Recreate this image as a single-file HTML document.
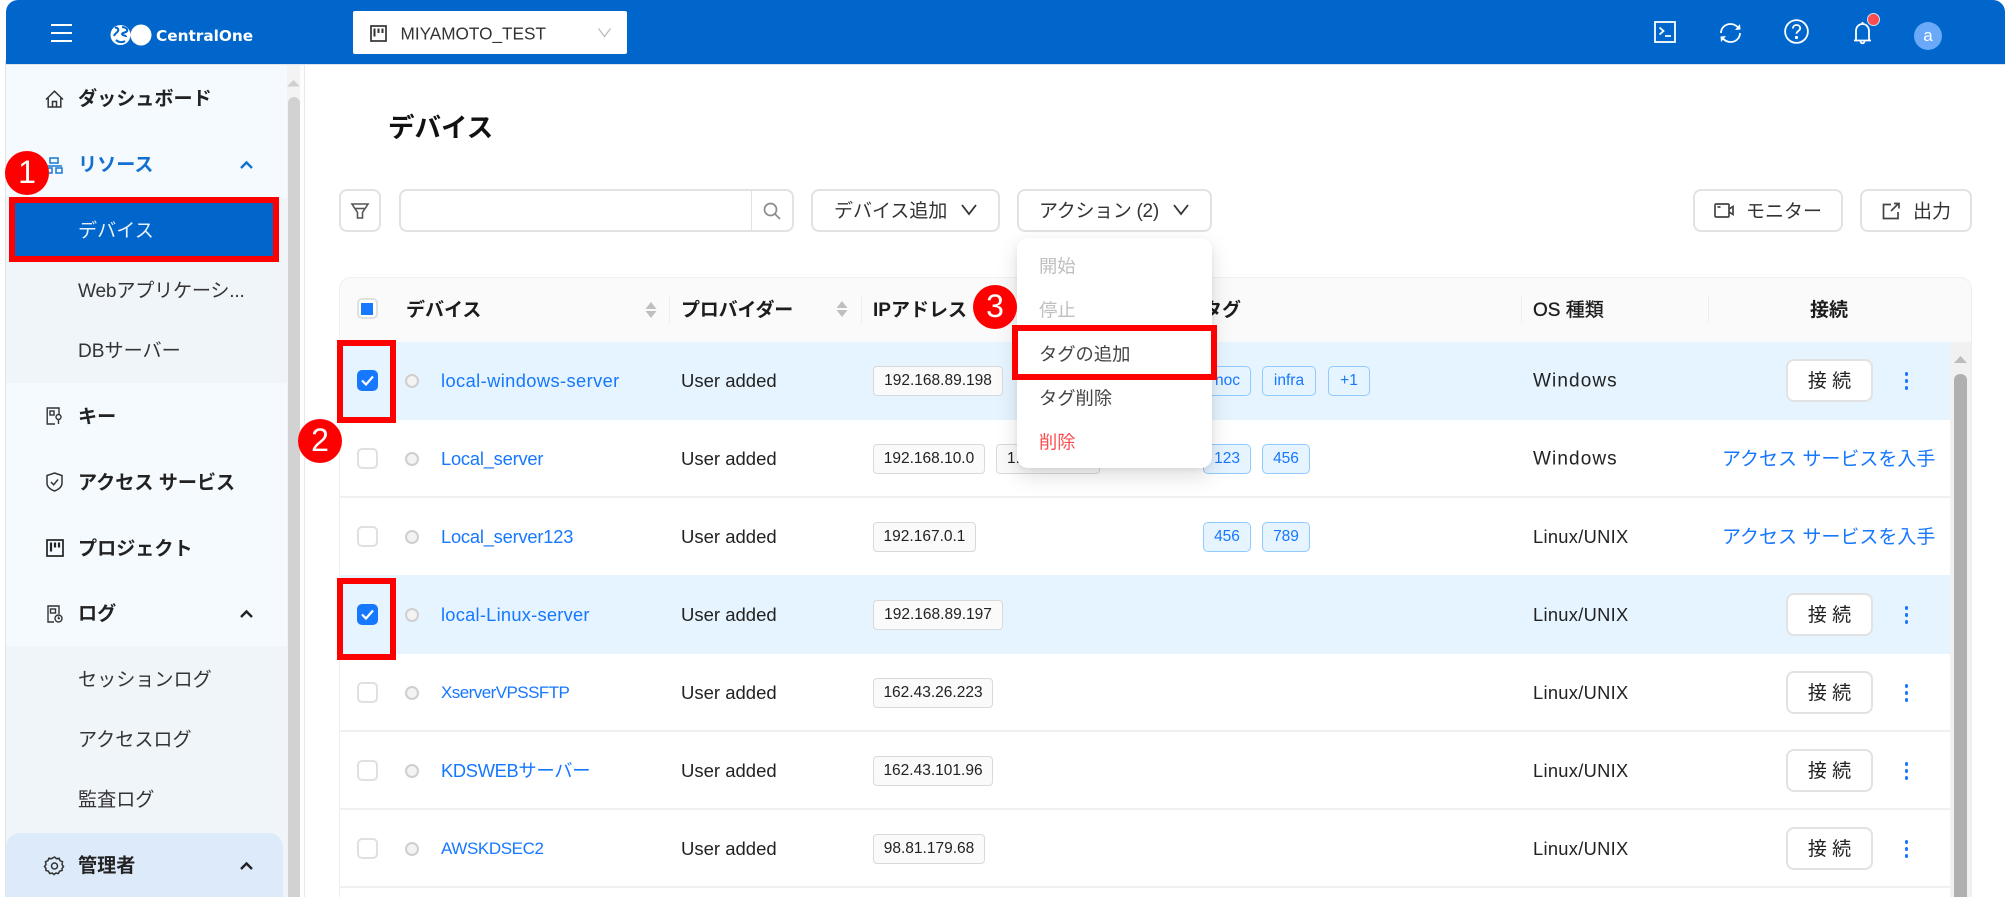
<!DOCTYPE html>
<html lang="ja">
<head>
<meta charset="utf-8">
<title>デバイス</title>
<style>
html,body{margin:0;padding:0;background:#fff}
body{position:relative;width:2005px;height:897px;overflow:hidden;font-family:"Liberation Sans","Noto Sans CJK JP",sans-serif;color:#222}
.b{position:absolute;box-sizing:border-box}
.t{position:absolute;white-space:nowrap;transform:translateY(-50%);line-height:1.2}
.s{font-size:19.1px;left:78px;font-weight:700;color:#222;transform:translateY(calc(-50% + 2.5px))}
.n{font-size:19.1px;left:78px;color:#333;transform:translateY(calc(-50% + 2.5px))}
.tb{transform:translateY(calc(-50% + 1.5px))}
svg{position:absolute;overflow:visible}
.btn{position:absolute;box-sizing:border-box;top:189px;height:43px;background:#fff;border:2px solid #e2e2e2;border-radius:8px}
.h{font-size:19px;font-weight:700;top:309px;color:#1c1c1c;transform:translateY(calc(-50% + 2.5px))}
.r{position:absolute;left:0;width:2005px;height:78px}
.bg{position:absolute;left:340px;width:1610px;top:0;height:78px;background:#fff;box-sizing:border-box}
.sel{background:#e6f4ff}
.sep{border-bottom:2px solid #f0f0f0}
.cb{position:absolute;left:357px;top:28px;width:21px;height:21px;box-sizing:border-box;border:2px solid #e0e0e0;border-radius:5px;background:#fff}
.cb.on{background:#1677ff;border-color:#1677ff}
.dot{position:absolute;left:405px;top:32px;width:14px;height:14px;box-sizing:border-box;border:2px solid #cfcfcf;border-radius:50%;background:#f3f3f3}
.nm{position:absolute;left:441px;top:39px;transform:translateY(-50%);font-size:18.3px;color:#1677ff;white-space:nowrap;line-height:1.2}
.ua{position:absolute;left:681px;top:39px;transform:translateY(-50%);font-size:18.5px;color:#222;white-space:nowrap;line-height:1.2}
.os{position:absolute;left:1533px;top:39px;transform:translateY(-50%);font-size:18.3px;color:#222;white-space:nowrap;line-height:1.2}
.ip{position:absolute;top:24px;height:30px;box-sizing:border-box;background:#fafafa;border:1.5px solid #d9d9d9;border-radius:4px;font-size:15.5px;line-height:27px;text-align:center;color:#222;white-space:nowrap;overflow:hidden}
.tg{position:absolute;top:24px;height:30px;box-sizing:border-box;background:#e6f4ff;border:1.5px solid #91caff;border-radius:5px;font-size:15.5px;line-height:27px;text-align:center;color:#1677ff;white-space:nowrap}
.con{position:absolute;left:1786px;top:17px;width:87px;height:43px;box-sizing:border-box;background:#fff;border:2px solid #e2e2e2;border-radius:8px;font-size:19px;line-height:42px;text-align:center;color:#222;white-space:nowrap}
.kb{position:absolute;left:1904.5px;width:3.5px;height:3.5px;border-radius:50%;background:#1677ff}
.acc{position:absolute;left:1722px;top:38px;transform:translateY(calc(-50% + 2.5px));font-size:19px;color:#1677ff;white-space:nowrap;line-height:1.2}
.rc{position:absolute;box-sizing:border-box;border:6px solid #f00}
.c{position:absolute;width:44px;height:44px;border-radius:50%;background:#f00;color:#fff;font-size:32px;line-height:43px;text-align:center}
.mi{position:absolute;left:1039px;font-size:18.3px;transform:translateY(calc(-50% + 1.5px));white-space:nowrap;line-height:1.2}
</style>
</head>
<body>

<!-- sidebar -->
<div class="b" style="left:5px;top:60px;width:1px;height:837px;background:#e2e2e2"></div>
<div class="b" style="left:6px;top:64px;width:298px;height:833px;background:#f5faff"></div>
<div class="b" style="left:6px;top:198px;width:281px;height:185px;background:#f0f5fa"></div>
<div class="b" style="left:6px;top:646px;width:281px;height:251px;background:#f0f5fa"></div>
<div class="b" style="left:6px;top:833px;width:277px;height:64px;background:#dceafa;border-radius:14px 14px 0 0"></div>
<div class="b" style="left:287px;top:64px;width:13px;height:833px;background:#f3f3f3"></div>
<div class="b" style="left:300px;top:64px;width:4px;height:833px;background:#fbfdff"></div>
<div class="b" style="left:304px;top:64px;width:1px;height:833px;background:#e9e9e9"></div>
<div class="b" style="left:288px;top:97px;width:12px;height:800px;background:#d2d2d2;border-radius:6px 6px 0 0"></div>
<svg style="left:287px;top:80px" width="13" height="7"><path d="M6.5 0L13 6.5H0z" fill="#d0d0d0"/></svg>

<!-- sidebar icons -->
<svg style="left:45px;top:90px" width="19" height="18" viewBox="0 0 19 18" fill="none" stroke="#333" stroke-width="1.5"><path d="M1 9.500L9.500 1.200L18 9.500"/><path d="M3.200 8v9h12.600V8"/><path d="M7.500 17v-5.500h4V17"/></svg>
<svg style="left:45px;top:157px" width="18" height="17" viewBox="0 0 18 17" fill="none" stroke="#1677d2" stroke-width="1.5"><rect x="5" y="1" width="8" height="5"/><path d="M1 9h16"/><rect x="1" y="11" width="6" height="5"/><rect x="11" y="11" width="6" height="5"/></svg>
<svg style="left:46px;top:407px" width="17" height="18" viewBox="0 0 17 18" fill="none" stroke="#333" stroke-width="1.4"><path d="M9 17H1.200V1H13v6"/><rect x="4" y="4" width="4" height="4"/><circle cx="12.500" cy="10" r="2.500"/><path d="M12.500 12.500V17"/></svg>
<svg style="left:46px;top:472px" width="17" height="20" viewBox="0 0 17 20" fill="none" stroke="#333" stroke-width="1.5"><path d="M8.500 1L16 3.500V11c0 4-3.500 6.500-7.500 8C4.500 17.500 1 15 1 11V3.500z"/><path d="M5 10l2.600 2.800L12 7.500"/></svg>
<svg style="left:46px;top:539px" width="18" height="18" viewBox="0 0 18 18" fill="none" stroke="#222"><rect x="1" y="1" width="16" height="16" stroke-width="1.700"/><path d="M5 3.500v9M9 3.500v5M13 3.500v5" stroke-width="2.200"/></svg>
<svg style="left:46px;top:605px" width="17" height="18" viewBox="0 0 17 18" fill="none" stroke="#333" stroke-width="1.4"><path d="M8 17H2V1h11v8"/><rect x="4.500" y="4" width="5" height="4"/><circle cx="12.500" cy="13.500" r="3.500"/><path d="M12.500 11.500v2h1.500"/></svg>
<svg style="left:45px;top:856px" width="19" height="19" viewBox="0 0 19 19" fill="none" stroke="#333" stroke-width="1.5"><path d="M9.500 1l2 1.700 2.600-.5 1 2.500 2.400 1-.5 2.800 1.500 2-1.500 2 .1 2-2.500.7-1.300 2.300-2.500-.4-1.800 1.400-1.800-1.400-2.500.4-1.300-2.300-2.500-.7.1-2-1.500-2 1.500-2-.5-2.800 2.400-1 1-2.500 2.600.5z"/><circle cx="9.500" cy="10" r="3"/></svg>

<!-- sidebar text -->
<div class="t s" style="top:98px">ダッシュボード</div>
<div class="t s" style="top:164px;color:#1270d0">リソース</div>
<svg style="left:240px;top:161px" width="13" height="8" fill="none" stroke="#1270d0" stroke-width="2.400"><path d="M1 7l5.500-5.500L12 7"/></svg>
<div class="b" style="left:15px;top:203px;width:259px;height:53px;background:#0066cc"></div>
<div class="t n" style="top:230px;color:#e8f2fc">デバイス</div>
<div class="t n" style="top:290px;letter-spacing:-.2px">Webアプリケーシ...</div>
<div class="t n" style="top:350px">DBサーバー</div>
<div class="t s" style="top:416px">キー</div>
<div class="t s" style="top:482px">アクセス サービス</div>
<div class="t s" style="top:548px">プロジェクト</div>
<div class="t s" style="top:613px">ログ</div>
<svg style="left:240px;top:610px" width="13" height="8" fill="none" stroke="#222" stroke-width="2.400"><path d="M1 7l5.500-5.500L12 7"/></svg>
<div class="t n" style="top:679px">セッションログ</div>
<div class="t n" style="top:739px">アクセスログ</div>
<div class="t n" style="top:799px">監査ログ</div>
<div class="t s" style="top:865px">管理者</div>
<svg style="left:240px;top:862px" width="13" height="8" fill="none" stroke="#222" stroke-width="2.400"><path d="M1 7l5.500-5.500L12 7"/></svg>

<!-- header -->
<div class="b" style="left:6px;top:0;width:1999px;height:64px;background:#0066cc;border-radius:12px 12px 0 0"></div>
<div class="b" style="left:6px;top:64px;width:1999px;height:1px;background:#dde3ea"></div>
<div class="b" style="left:51px;top:24px;width:21px;height:2px;background:#fff"></div>
<div class="b" style="left:51px;top:32px;width:21px;height:2px;background:#fff"></div>
<div class="b" style="left:51px;top:40px;width:21px;height:2px;background:#fff"></div>
<svg style="left:110px;top:24px" width="42" height="22" viewBox="0 0 42 22"><circle cx="31" cy="11" r="10.500" fill="#fff"/><circle cx="10.500" cy="11" r="10" fill="#fff"/><path d="M5 4c2-1 4 1 3 3s-3 2-4 5M12 3c3 0 6 2 5 4-1 2-4 1-5 3 1 2 4 1 4 3M6 16c2 2 6 3 9 1" fill="none" stroke="#0066cc" stroke-width="2"/></svg>
<div class="t" style="left:156px;top:36px;font-family:'DejaVu Sans',sans-serif;font-weight:700;font-size:15.300px;color:#fff">CentralOne</div>
<div class="b" style="left:353px;top:11px;width:274px;height:43px;background:#fff;border-radius:2px"></div>
<svg style="left:370px;top:25px" width="17" height="17" viewBox="0 0 17 17" fill="none" stroke="#333"><rect x="1" y="1" width="15" height="15" stroke-width="1.700"/><path d="M4.500 3.500v8M8.500 3.500v4.500M12.500 3.500v4.500" stroke-width="2"/></svg>
<div class="t" style="left:400.5px;top:34px;font-size:17.200px;color:#333">MIYAMOTO_TEST</div>
<svg style="left:598px;top:28px" width="13" height="9" fill="none" stroke="#bbb" stroke-width="1.300"><path d="M.5.500L6.500 8.500 12.500.500"/></svg>

<svg style="left:1654px;top:21px" width="22" height="22" viewBox="0 0 22 22" fill="none" stroke="#fff" stroke-width="1.800"><rect x="1" y="1" width="20" height="20"/><path d="M5.500 6.500l4 3.500-4 3.500M11 15h6"/></svg>
<svg style="left:1719px;top:22px" width="23" height="22" viewBox="0 0 23 22" fill="none" stroke="#fff" stroke-width="1.800"><path d="M2 11C2 6 6 2 11.500 2c3.500 0 6 1.600 8 4"/><path d="M21 11c0 5-4 9-9.500 9-3.500 0-6-1.600-8-4"/><path d="M16 8l5.500-.5L21 2z" fill="#fff" stroke="none"/><path d="M7 14l-5.500.5L2 20z" fill="#fff" stroke="none"/></svg>
<svg style="left:1784px;top:19px" width="25" height="25" viewBox="0 0 25 25" fill="none" stroke="#fff" stroke-width="1.800"><circle cx="12.500" cy="12.500" r="11.400"/><path d="M8.800 9.500c.2-2.300 1.800-3.500 3.800-3.500s3.600 1.300 3.600 3.200c0 2.800-3.700 2.800-3.700 5.600"/><circle cx="12.500" cy="18.500" r=".7" fill="#fff"/></svg>
<svg style="left:1853px;top:21px" width="19" height="24" viewBox="0 0 19 24" fill="none" stroke="#fff" stroke-width="1.800"><path d="M1 19.500h17M3 19.500V10c0-4 2.800-7 6.500-7S16 6 16 10v9.500"/><path d="M9.500 3V1"/><path d="M7.500 20c0 3 4 3 4 0"/></svg>
<div class="b" style="left:1867.500px;top:13.500px;width:11px;height:11px;border-radius:50%;background:#ff4d4f;box-shadow:0 0 0 1px #cfe3f7"></div>
<div class="b" style="left:1914px;top:22px;width:28px;height:28px;border-radius:50%;background:#69a9f7;color:#fff;font-size:17px;line-height:28px;text-align:center">a</div>

<!-- title -->
<div class="t" style="left:388px;top:129px;font-size:26.500px;font-weight:700;color:#111">デバイス</div>

<!-- toolbar -->
<div class="btn" style="left:339px;width:42px"></div>
<svg style="left:351px;top:203px" width="18" height="16" viewBox="0 0 18 16" fill="none" stroke="#555" stroke-width="1.600"><path d="M1 1h16l-5.500 8.500V15h-5V9.500z"/><path d="M4.500 5.500h9"/></svg>
<div class="btn" style="left:399px;width:395px"></div>
<div class="b" style="left:751px;top:190px;width:1px;height:41px;background:#e2e2e2"></div>
<svg style="left:763px;top:202px" width="18" height="18" viewBox="0 0 18 18" fill="none" stroke="#8c8c8c" stroke-width="1.700"><circle cx="7.500" cy="7.500" r="6"/><path d="M12 12l5 5"/></svg>
<div class="btn" style="left:811px;width:189px"></div>
<div class="t tb" style="left:834px;top:211px;font-size:19px;color:#333">デバイス追加</div>
<svg style="left:961px;top:204px" width="16" height="11" fill="none" stroke="#333" stroke-width="1.800"><path d="M1 1l7 9 7-9"/></svg>
<div class="btn" style="left:1017px;width:195px"></div>
<div class="t tb" style="left:1039px;top:211px;font-size:19px;color:#333;letter-spacing:-.3px">アクション (2)</div>
<svg style="left:1173px;top:204px" width="16" height="11" fill="none" stroke="#333" stroke-width="1.800"><path d="M1 1l7 9 7-9"/></svg>
<div class="btn" style="left:1693px;width:150px"></div>
<svg style="left:1714px;top:203px" width="20" height="15" viewBox="0 0 20 15" fill="none" stroke="#444" stroke-width="1.700"><rect x="1" y="1" width="14" height="13" rx="1"/><path d="M15 6l4-2.500v8L15 9"/><path d="M3.500 4h3"/></svg>
<div class="t" style="left:1746px;top:213px;font-size:19px;color:#333">モニター</div>
<div class="btn" style="left:1860px;width:112px"></div>
<svg style="left:1882px;top:202px" width="18" height="18" viewBox="0 0 18 18" fill="none" stroke="#444" stroke-width="1.700"><path d="M9 2.500H1.500V16.500H16V10"/><path d="M9 9l7-7M12 1.500h5v5"/></svg>
<div class="t" style="left:1913px;top:213px;font-size:19px;color:#333">出力</div>

<!-- table header -->
<div class="b" style="left:339px;top:277px;width:1633px;height:65px;background:#fafafa;border:1px solid #f0f0f0;border-bottom:0;border-radius:12px 12px 0 0"></div>
<div class="b" style="left:339px;top:342px;width:1px;height:555px;background:#eee"></div>
<div class="b" style="left:1950px;top:342px;width:21px;height:555px;background:#f1f1f1"></div>
<div class="b" style="left:1971px;top:342px;width:1px;height:555px;background:#eee"></div>
<div class="b" style="left:1954px;top:374px;width:13px;height:523px;background:#b0b0b0;border-radius:6px 6px 0 0"></div>
<svg style="left:1954px;top:356px" width="13" height="7"><path d="M6.500 0L13 7H0z" fill="#bcbcbc"/></svg>

<div class="b" style="left:357px;top:298px;width:21px;height:21px;border:2px solid #e0e0e0;border-radius:5px;background:#fff"></div>
<div class="b" style="left:361px;top:303px;width:12px;height:12px;background:#1677ff"></div>
<div class="t h" style="left:406px">デバイス</div>
<svg style="left:645px;top:302px" width="12" height="16"><path d="M6 0l5.500 7H.500zM6 16L.500 9h11z" fill="#bfbfbf"/></svg>
<div class="b" style="left:669px;top:295px;width:1px;height:28px;background:#eee"></div>
<div class="t h" style="left:681px;letter-spacing:-.2px">プロバイダー</div>
<svg style="left:836px;top:301px" width="12" height="16"><path d="M6 0l5.500 7H.500zM6 16L.500 9h11z" fill="#bfbfbf"/></svg>
<div class="b" style="left:861px;top:295px;width:1px;height:28px;background:#eee"></div>
<div class="t h" style="left:873px">IPアドレス</div>
<div class="t h" style="left:1203px">タグ</div>
<div class="b" style="left:1521px;top:295px;width:1px;height:28px;background:#eee"></div>
<div class="t h" style="left:1533px;font-weight:400;-webkit-text-stroke:.3px #1c1c1c">OS 種類</div>
<div class="b" style="left:1708px;top:295px;width:1px;height:28px;background:#eee"></div>
<div class="t h" style="left:1810px">接続</div>

<!-- rows -->
<div class="r" style="top:342px"><div class="bg sel"></div>
<div class="cb on"><svg style="left:2px;top:3px" width="13" height="11" fill="none" stroke="#fff" stroke-width="2.200"><path d="M1 5.500l4 4L12 1.500"/></svg></div><div class="dot"></div>
<div class="nm" style="letter-spacing:.4px">local-windows-server</div><div class="ua">User added</div>
<div class="ip" style="left:873px;width:130px">192.168.89.198</div>
<div class="tg" style="left:1203px;width:48px;text-align:right;padding-right:10px">noc</div><div class="tg" style="left:1262px;width:54px">infra</div><div class="tg" style="left:1328px;width:42px">+1</div>
<div class="os" style="font-size:19px;letter-spacing:1.100px;top:40px">Windows</div>
<div class="con">接 続</div><div class="kb" style="top:30px"></div><div class="kb" style="top:37px"></div><div class="kb" style="top:44px"></div></div>

<div class="r" style="top:420px"><div class="bg sep"></div>
<div class="cb"></div><div class="dot"></div>
<div class="nm" style="letter-spacing:-.2px">Local_server</div><div class="ua">User added</div>
<div class="ip" style="left:873px;width:112px">192.168.10.0</div><div class="ip" style="left:996px;width:104px;text-align:left;padding-left:10px">1.1.1.1</div>
<div class="tg" style="left:1203px;width:48px;text-align:right;padding-right:10px">123</div><div class="tg" style="left:1262px;width:48px">456</div>
<div class="os" style="font-size:19px;letter-spacing:1.100px;top:40px">Windows</div>
<div class="acc">アクセス サービスを入手</div></div>

<div class="r" style="top:498px"><div class="bg"></div>
<div class="cb"></div><div class="dot"></div>
<div class="nm" style="letter-spacing:-.2px">Local_server123</div><div class="ua">User added</div>
<div class="ip" style="left:873px;width:103px">192.167.0.1</div>
<div class="tg" style="left:1203px;width:48px">456</div><div class="tg" style="left:1262px;width:48px">789</div>
<div class="os" style="letter-spacing:.3px">Linux/UNIX</div>
<div class="acc">アクセス サービスを入手</div></div>

<div class="r" style="top:576px"><div class="bg sel" style="top:-1px;height:79px"></div>
<div class="cb on"><svg style="left:2px;top:3px" width="13" height="11" fill="none" stroke="#fff" stroke-width="2.200"><path d="M1 5.500l4 4L12 1.500"/></svg></div><div class="dot"></div>
<div class="nm" style="letter-spacing:.25px">local-Linux-server</div><div class="ua">User added</div>
<div class="ip" style="left:873px;width:130px">192.168.89.197</div>
<div class="os" style="letter-spacing:.3px">Linux/UNIX</div>
<div class="con">接 続</div><div class="kb" style="top:30px"></div><div class="kb" style="top:37px"></div><div class="kb" style="top:44px"></div></div>

<div class="r" style="top:654px"><div class="bg sep"></div>
<div class="cb"></div><div class="dot"></div>
<div class="nm" style="font-size:17px;letter-spacing:-.55px">XserverVPSSFTP</div><div class="ua">User added</div>
<div class="ip" style="left:873px;width:120px">162.43.26.223</div>
<div class="os" style="letter-spacing:.3px">Linux/UNIX</div>
<div class="con">接 続</div><div class="kb" style="top:30px"></div><div class="kb" style="top:37px"></div><div class="kb" style="top:44px"></div></div>

<div class="r" style="top:732px"><div class="bg sep"></div>
<div class="cb"></div><div class="dot"></div>
<div class="nm" style="letter-spacing:-.3px">KDSWEBサーバー</div><div class="ua">User added</div>
<div class="ip" style="left:873px;width:120px">162.43.101.96</div>
<div class="os" style="letter-spacing:.3px">Linux/UNIX</div>
<div class="con">接 続</div><div class="kb" style="top:30px"></div><div class="kb" style="top:37px"></div><div class="kb" style="top:44px"></div></div>

<div class="r" style="top:810px"><div class="bg sep"></div>
<div class="cb"></div><div class="dot"></div>
<div class="nm" style="font-size:17px;letter-spacing:-.4px">AWSKDSEC2</div><div class="ua">User added</div>
<div class="ip" style="left:873px;width:112px">98.81.179.68</div>
<div class="os" style="letter-spacing:.3px">Linux/UNIX</div>
<div class="con">接 続</div><div class="kb" style="top:30px"></div><div class="kb" style="top:37px"></div><div class="kb" style="top:44px"></div></div>

<!-- dropdown -->
<div class="b" style="left:1017px;top:238px;width:195px;height:230px;background:#fff;border-radius:11px;box-shadow:0 8px 22px rgba(0,0,0,.13),0 2px 6px rgba(0,0,0,.06)"></div>
<div class="mi" style="top:265px;color:#bfbfbf">開始</div>
<div class="mi" style="top:309px;color:#bfbfbf">停止</div>
<div class="mi" style="top:353px;color:#444">タグの追加</div>
<div class="mi" style="top:397px;color:#444">タグ削除</div>
<div class="mi" style="top:441px;color:#ff4d4f">削除</div>

<!-- annotations -->
<div class="rc" style="left:9px;top:197px;width:270px;height:65px"></div>
<div class="rc" style="left:337px;top:340px;width:59px;height:83px"></div>
<div class="rc" style="left:337px;top:578px;width:59px;height:82px"></div>
<div class="rc" style="left:1012px;top:325px;width:205px;height:55px"></div>
<div class="c" style="left:5px;top:151px">1</div>
<div class="c" style="left:298px;top:419px">2</div>
<div class="c" style="left:973px;top:285px">3</div>

</body>
</html>
